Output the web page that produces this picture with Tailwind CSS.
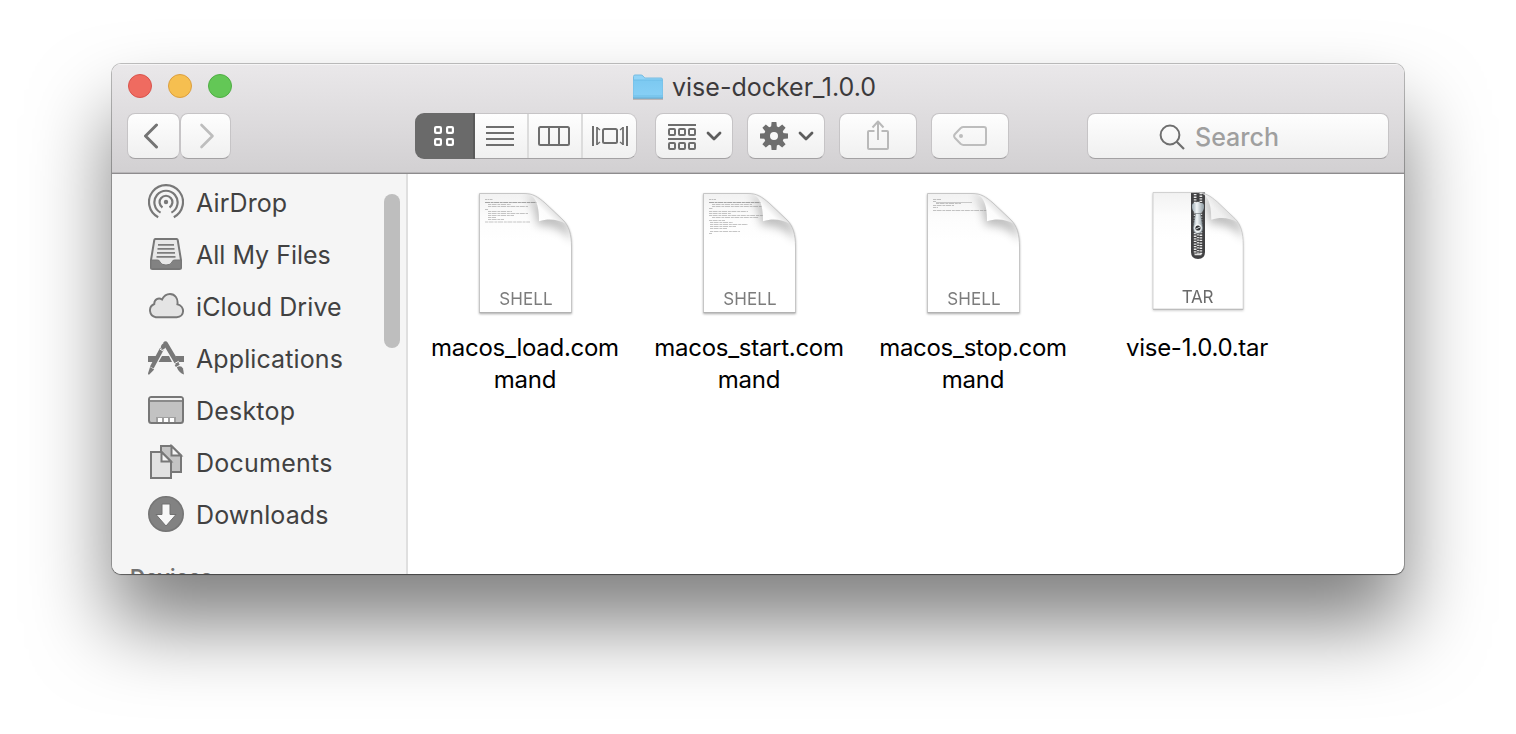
<!DOCTYPE html>
<html lang="en">
<head>
<meta charset="utf-8">
<title>vise-docker_1.0.0</title>
<script src="https://cdn.jsdelivr.net/npm/@tailwindcss/browser@4"></script>
</head>
<body class="h-[734px] overflow-hidden bg-white pt-16 pl-28 font-['Inter',sans-serif]">
<svg class="absolute size-0" aria-hidden="true">
  <defs>
    <linearGradient id="page" x1="0" y1="0" x2="0" y2="1"><stop offset="0" stop-color="#f2f2f2"/><stop offset=".2" stop-color="#fcfcfc"/><stop offset=".4" stop-color="#fff"/></linearGradient>
    <linearGradient id="curl" gradientUnits="userSpaceOnUse" x1="63" y1="31" x2="76" y2="18"><stop offset="0" stop-color="#fff"/><stop offset=".6" stop-color="#fcfcfc"/><stop offset="1" stop-color="#e2e2e2"/></linearGradient>
    <linearGradient id="metal" x1="0" y1="0" x2="1" y2="0"><stop offset="0" stop-color="#9aa8b0"/><stop offset=".4" stop-color="#f1f5f7"/><stop offset="1" stop-color="#8b989f"/></linearGradient>
    <linearGradient id="folder" x1="0" y1="0" x2="0" y2="1"><stop offset="0" stop-color="#7cc9f1"/><stop offset="1" stop-color="#88d0f6"/></linearGradient>
    <filter id="soft" x="-60%" y="-60%" width="220%" height="220%"><feGaussianBlur stdDeviation="5"/></filter>
    <clipPath id="sheet"><path d="M3.500 2.500H48C57 2.500 62 6 69 12L87 29C93 35 95.500 43 95.500 56V121.500H3.500Z"/></clipPath>
    <g id="paper">
      <path d="M3.500 2.500H48C57 2.500 62 6 69 12L87 29C93 35 95.500 43 95.500 56V121.500H3.500Z" fill="url(#page)"/>
      <g clip-path="url(#sheet)"><path d="M53 4L92 32L97 52C88 38 78 35 61 34C60 22 58 12 50 4Z" fill="#000" opacity=".25" filter="url(#soft)"/></g>
    </g>
    <g id="fold">
      <path d="M51 2.500C59 5 63 12 63 30.300C72 27 82 28 90 33L87 29L69 12C62 6 58 3 51 2.500Z" fill="url(#curl)"/>
      <path d="M3.500 2.500H48C57 2.500 62 6 69 12L87 29C93 35 95.500 43 95.500 56V121.500H3.500Z" fill="none" stroke="#c2c2c2" stroke-width=".9"/>
      <path d="M3.500 121.700H95.500" stroke="#adadad" stroke-width=".9"/>
    </g>
  </defs>
</svg>

<main class="flex h-[510px] w-[1292px] flex-col overflow-hidden rounded-[9px] bg-white shadow-[0_0_0_1px_rgba(0,0,0,0.24),0_1px_1px_rgba(0,0,0,0.35),0_50px_80px_rgba(0,0,0,0.5)]">
  <header class="flex h-[110px] shrink-0 flex-col border-b border-[#8e8c8e] bg-linear-to-b from-[#eae8ea] to-[#d2d0d2] shadow-[inset_0_1px_0_#f6f5f6,inset_0_-1px_0_#b8b6b8]">
    <div class="flex h-[49px] items-center pl-4">
      <div class="flex w-[504px] gap-4 pb-[5px]">
        <span class="size-6 rounded-full border border-[#d9534c] bg-[#ef6b60]"></span>
        <span class="size-6 rounded-full border border-[#dc9f3f] bg-[#f6bf50]"></span>
        <span class="size-6 rounded-full border border-[#4fae44] bg-[#63c756]"></span>
      </div>
      <svg class="mb-1 h-[26px] w-8 shrink-0" viewBox="0 0 32 26"><path d="M1 25H31" stroke="#b0a9a6" stroke-width="1.500"/><path d="M1.500 2.500q0-1.500 1.500-1.500H9q1.200 0 2 1l1 1.200q.7.800 1.700.8H29q1.500 0 1.500 1.500V24H1.500Z" fill="#92d4f7" stroke="#76bce2" stroke-width="1"/><path d="M1.500 6H30.500V24H1.500Z" fill="url(#folder)"/><path d="M1.500 6H30.500M1.500 22H30.500" stroke="#6cbbe4" stroke-width=".9"/><path d="M1 24H31" stroke="#5ea6cd" stroke-width="1.200"/></svg>
      <h1 class="ml-2 pb-[3px] text-[25px] leading-8 font-[430] tracking-[0px] whitespace-nowrap text-[#3c3a3c]">vise-docker_1.0.0</h1>
    </div>
    <div class="flex h-[46px] pl-[15px] *:shrink-0">
      <button class="flex w-[53px] items-center justify-center rounded-lg border border-[#c6c4c6] border-b-[#a3a1a3] bg-linear-to-b from-[#fefefe] to-[#f0f0f0]"><svg class="-ml-1.5 h-[26px] w-4" viewBox="0 0 16 26"><path d="M13.500 2L2.500 13L13.500 24" fill="none" stroke="#747474" stroke-width="3" stroke-linecap="round" stroke-linejoin="round"/></svg></button>
      <button class="flex w-[51px] items-center justify-center rounded-lg border border-[#c6c4c6] border-b-[#a3a1a3] bg-linear-to-b from-[#fefefe] to-[#f0f0f0]"><svg class="ml-0.5 h-[26px] w-4" viewBox="0 0 16 26"><path d="M2.500 2L13.500 13L2.500 24" fill="none" stroke="#bdbdbd" stroke-width="2.600" stroke-linecap="round" stroke-linejoin="round"/></svg></button>
      <div class="ml-[184px] flex w-[222px]">
        <div class="flex w-[60px] items-center justify-center rounded-l-[9px] border-r-2 border-[#5a5a5a] bg-[#6a6a6a]"><svg class="size-5" viewBox="0 0 20 20" fill="none" stroke="#fff" stroke-width="2.200"><rect x="1.100" y="1.100" width="5.800" height="5.800" rx="1"/><rect x="13.100" y="1.100" width="5.800" height="5.800" rx="1"/><rect x="1.100" y="13.100" width="5.800" height="5.800" rx="1"/><rect x="13.100" y="13.100" width="5.800" height="5.800" rx="1"/></svg></div>
        <div class="flex flex-1 rounded-r-[9px] border border-l-0 border-[#c6c4c6] border-b-[#a3a1a3] bg-linear-to-b from-[#fefefe] to-[#f0f0f0]">
          <div class="flex w-[54px] items-center justify-center border-r-2 border-[#dcdcdc] pr-0.5"><svg class="h-5 w-7" viewBox="0 0 28 20"><path d="M0 1H28M0 7H28M0 13H28M0 19H28" stroke="#6e6e6e" stroke-width="2"/></svg></div>
          <div class="flex w-[54px] items-center border-r-2 border-[#dcdcdc] pl-[9px]"><svg class="h-5 w-8" viewBox="0 0 32 20"><path d="M11 1V19M21 1V19" stroke="#6e6e6e" stroke-width="2"/><rect x="1" y="1" width="30" height="18" rx="1.500" fill="none" stroke="#6e6e6e" stroke-width="2"/></svg></div>
          <div class="flex flex-1 items-center pl-[9px]"><svg class="h-5 w-9" viewBox="0 0 36 20"><path d="M1 0V20M35 0V20" stroke="#6e6e6e" stroke-width="2"/><path d="M5 1V19M31 1V19" stroke="#6e6e6e" stroke-width="1.800"/><path d="M5 1.500L8 4M5 18.500L8 16M31 1.500L28 4M31 18.500L28 16" stroke="#6e6e6e" stroke-width="1.300"/><rect x="11" y="3" width="14" height="14" rx="1.500" fill="none" stroke="#6e6e6e" stroke-width="2"/></svg></div>
        </div>
      </div>
      <button class="ml-[18px] flex w-[78px] items-center rounded-lg border border-[#c6c4c6] border-b-[#a3a1a3] bg-linear-to-b from-[#fefefe] to-[#f0f0f0] pl-3"><svg class="mt-0.5 h-[26px] w-7" viewBox="0 0 28 26" fill="none" stroke="#6e6e6e" stroke-width="2"><path d="M0 1H28M0 15H28"/><rect x="1" y="5" width="6" height="6" rx="1"/><rect x="11" y="5" width="6" height="6" rx="1"/><rect x="21" y="5" width="6" height="6" rx="1"/><rect x="1" y="19" width="6" height="6" rx="1"/><rect x="11" y="19" width="6" height="6" rx="1"/><rect x="21" y="19" width="6" height="6" rx="1"/></svg><svg class="ml-2.5 h-[10px] w-4" viewBox="0 0 16 10"><path d="M2 2L8 8L14 2" fill="none" stroke="#5d5d5d" stroke-width="2.800" stroke-linecap="round" stroke-linejoin="round"/></svg></button>
      <button class="ml-3.5 flex w-[78px] items-center rounded-lg border border-[#c6c4c6] border-b-[#a3a1a3] bg-linear-to-b from-[#fefefe] to-[#f0f0f0] pl-3"><svg class="size-7" viewBox="-14 -14 28 28"><circle r="7" fill="none" stroke="#6e6e6e" stroke-width="6"/><g fill="#6e6e6e"><g id="teeth"><path d="M-2.400-14H2.400L3-8H-3Z"/><path d="M-2.400 14H2.400L3 8H-3Z"/><path d="M14-2.400V2.400L8 3V-3Z"/><path d="M-14-2.400V2.400L-8 3V-3Z"/></g><use href="#teeth" transform="rotate(45)"/></g></svg><svg class="ml-2.5 h-[10px] w-4" viewBox="0 0 16 10"><path d="M2 2L8 8L14 2" fill="none" stroke="#5d5d5d" stroke-width="2.800" stroke-linecap="round" stroke-linejoin="round"/></svg></button>
      <button class="ml-3.5 flex w-[78px] items-center justify-center rounded-lg border border-[#c6c4c6] border-b-[#a3a1a3] bg-linear-to-b from-[#fefefe] to-[#f0f0f0]"><svg class="mb-0.5 h-[30px] w-[22px]" viewBox="0 0 22 30" fill="none" stroke="#b9b9b9" stroke-width="2" stroke-linejoin="round"><path d="M7.500 11H2Q1 11 1 12V28Q1 29 2 29H20Q21 29 21 28V12Q21 11 20 11H14.500M11 20V2M5.500 7.500L11 1.500L16.500 7.500"/></svg></button>
      <button class="ml-3.5 flex w-[78px] items-center justify-center rounded-lg border border-[#c6c4c6] border-b-[#a3a1a3] bg-linear-to-b from-[#fefefe] to-[#f0f0f0]"><svg class="h-5 w-[34px]" viewBox="0 0 34 20"><path d="M10.500 1H31Q33 1 33 3V17Q33 19 31 19H10.500Q9 19 7.500 17.800L2 12Q.2 10 2 8L7.500 2.200Q9 1 10.500 1Z" fill="none" stroke="#bdbdbd" stroke-width="2"/><circle cx="8" cy="10" r="2" fill="#bdbdbd"/></svg></button>
      <div class="ml-[78px] flex w-[302px] items-center rounded-lg border border-[#c6c4c6] border-b-[#a3a1a3] bg-linear-to-b from-[#fefefe] to-[#f0f0f0] pl-[71px]"><svg class="mt-0.5 size-[26px]" viewBox="0 0 26 26" fill="none" stroke="#6e6e6e" stroke-width="2"><circle cx="11" cy="11" r="9.400"/><path d="M17.500 17.500L25 25" stroke-width="2.200"/></svg><span class="ml-2.5 pt-[3px] text-[25px] font-medium tracking-[0px] text-[#9f9f9f]">Search</span></div>
    </div>
  </header>

  <div class="flex min-h-0 flex-1">
    <aside class="flex w-[296px] shrink-0 justify-between overflow-hidden border-r-2 border-[#dfdfdf] bg-[#f5f5f5]">
      <nav class="pt-0.5 text-[25px] font-[430] tracking-[0.1px] whitespace-nowrap text-[#414141]">
        <a class="flex h-[52px] items-center gap-3 pl-9"><svg class="size-9" viewBox="0 0 36 36" fill="none" stroke="#787878" stroke-width="2.200"><path d="M10.200 33.200A17 17 0 1 1 25.800 33.200M12.600 28.600A11.600 11.600 0 1 1 23.400 28.600M14.500 23.500A6.400 6.400 0 1 1 21.500 23.500"/><circle cx="18" cy="18" r="2.200" fill="#787878" stroke="none"/></svg><span class="pt-[3px]">AirDrop</span></a>
        <a class="flex h-[52px] items-center gap-3 pl-9"><svg class="size-9" viewBox="0 0 36 36"><path d="M7.300 3H28.700Q29.500 3 29.700 4L33 24V31.500Q33 33 31.500 33H4.500Q3 33 3 31.500V24L6.300 4Q6.500 3 7.300 3Z" fill="#e8e8e8" stroke="#777" stroke-width="2"/><path d="M3 24H9.500Q11.500 24 12 26Q13 29 18 29T24 26Q24.500 24 26.500 24H33V32.500H3Z" fill="#828282" stroke="#777" stroke-width="1"/><path d="M10 8.800H26M9.500 12.800H26.500M9 16.800H27M8.500 20.800H27.500" stroke="#7d7d7d" stroke-width="1.700"/></svg><span class="pt-[3px] tracking-[0px]">All My Files</span></a>
        <a class="flex h-[52px] items-center gap-3 pl-9"><svg class="size-9" viewBox="0 0 36 36"><path d="M7.800 29.200A6.900 6.900 0 0 1 6.300 16C6 11.500 10.500 9 14 11.500C16 7.500 19 6 22 6C27 6 30.300 10.500 29.400 16.200C37.200 18 36.900 29.200 28.700 29.200Z" fill="#e4e4e4" stroke="#787878" stroke-width="1.900"/></svg><span class="pt-[3px]">iCloud Drive</span></a>
        <a class="flex h-[52px] items-center gap-3 pl-9"><svg class="size-9" viewBox="0 0 36 36"><path d="M0 16H8.500L5.500 22H0ZM14 16H21L24 22H10.500ZM27.500 16H36V22H30Z" fill="#787878"/><path d="M13.800 9L3.800 27.500" stroke="#787878" stroke-width="4.200"/><path d="M15 7L15.800 5.800" stroke="#787878" stroke-width="4.500" stroke-linecap="round"/><path d="M2 27L6.200 29.500L.8 35L0 33.500Z" fill="#787878"/><path d="M17.500 3.500L28.500 22" stroke="#787878" stroke-width="4.500" stroke-linecap="round"/><path d="M28.600 23.800L29.800 25.800" stroke="#787878" stroke-width="4.500"/><path d="M28.800 27.300Q33 24.500 35 28.500L36 34.500Q31 33 28.800 27.300Z" fill="#787878"/><path d="M26.200 23.800L30.800 21.200M12 9.200L16 11.500" stroke="#f5f5f5" stroke-width="1"/></svg><span class="pt-[3px]">Applications</span></a>
        <a class="flex h-[52px] items-center gap-3 pl-9"><svg class="size-9" viewBox="0 0 36 36"><rect x="1" y="5" width="34" height="26" rx="2.500" fill="#c2c2c2" stroke="#777" stroke-width="2"/><path d="M2 7Q2 6 3 6H33Q34 6 34 7V8H2Z" fill="#f2f2f2"/><path d="M1 9H35" stroke="#777" stroke-width="1.600"/><path d="M8 25H28V30H8Z" fill="#a0a0a0"/><path d="M10 26H14V30H10ZM16 26H20V30H16ZM22 26H26V30H22Z" fill="#fff"/></svg><span class="pt-[3px] tracking-[0.2px]">Desktop</span></a>
        <a class="flex h-[52px] items-center gap-3 pl-9"><svg class="size-9" viewBox="0 0 36 36" stroke="#777" stroke-width="2"><path d="M13 2H23.500L33 11.500V28H13Z" fill="#c4c4c4"/><path d="M23.500 2V11.500H33Z" fill="#f5f5f5"/><path d="M3 8H13.500L23 17.500V34H3Z" fill="#e1e1e1"/><path d="M13.500 8V17.500H23Z" fill="#f5f5f5"/></svg><span class="pt-[3px] tracking-[0.25px]">Documents</span></a>
        <a class="flex h-[52px] items-center gap-3 pl-9"><svg class="size-9" viewBox="0 0 36 36"><circle cx="18" cy="18" r="17.200" fill="#828282" stroke="#757575" stroke-width="1.600"/><path d="M14 8H22V18.500H28L18 30L8 18.500H14Z" fill="#f8f8f8" stroke="#707070" stroke-width="1"/></svg><span class="pt-[3px]">Downloads</span></a>
        <h2 class="pt-[19px] pl-[18px] text-[21px] leading-[38px] font-semibold tracking-[0.2px] text-[#737373]">Devices</h2>
      </nav>
      <div class="mt-5 mr-1.5 h-[154px] w-4 rounded-full bg-[#bebebe]"></div>
    </aside>

    <section class="grid h-[230px] grid-cols-[repeat(4,224px)] pt-[17px] pl-[5px] text-center text-2xl leading-8 font-[420] tracking-[-0.28px] text-black">
      <figure class="flex flex-col items-center"><svg class="h-[126px] w-[98px] drop-shadow-[0_1px_1px_rgba(0,0,0,0.3)]" viewBox="0 0 98 126"><use href="#paper"/><g stroke="#777" stroke-width=".6" opacity=".7"><path d="M9 8.500H17" stroke-dasharray="2 .5"/><path d="M9 11.500H62" stroke-width=".9" stroke-dasharray="5 .6 3 .5"/><path d="M12 13.500H35M12 15.500H52M9 18.500H12M12 20.500H36M12 22.500H52M12 24.500H38M12 26.500H20M12 28.500H28M9 31H54" stroke-dasharray="3 .6 5 .8"/></g><use href="#fold"/><text x="50" y="114" text-anchor="middle" font-size="17" letter-spacing=".1" font-weight="370" fill="#7c7c7c">SHELL</text></svg><figcaption class="mt-[15px]">macos_load.com<br>mand</figcaption></figure>
      <figure class="flex flex-col items-center"><svg class="h-[126px] w-[98px] drop-shadow-[0_1px_1px_rgba(0,0,0,0.3)]" viewBox="0 0 98 126"><use href="#paper"/><g stroke="#777" stroke-width=".6" opacity=".7"><path d="M9 8.500H16" stroke-dasharray="2 .5"/><path d="M9 11.500H62" stroke-width=".9" stroke-dasharray="5 .6 3 .5"/><path d="M12 13.500H52M12 15.500H62M9 17.500H13M9 20.500H48M9 22.500H31M9 24.500H63M12 26.500H59M9 29.500H25M10 31.500H33M10 33.500H48M10 35.500H36M10 37.500H27M10 40.500H40M9 42.500H12" stroke-dasharray="3 .6 5 .8"/></g><use href="#fold"/><text x="50" y="114" text-anchor="middle" font-size="17" letter-spacing=".1" font-weight="370" fill="#7c7c7c">SHELL</text></svg><figcaption class="mt-[15px]">macos_start.com<br>mand</figcaption></figure>
      <figure class="flex flex-col items-center"><svg class="h-[126px] w-[98px] drop-shadow-[0_1px_1px_rgba(0,0,0,0.3)]" viewBox="0 0 98 126"><use href="#paper"/><g stroke="#777" stroke-width=".6" opacity=".7"><path d="M9 8.500H17M9 10.500H12M12 12.500H37M9 14.500H30M9 16.500H14M9 19.500H63" stroke-dasharray="3 .6 5 .8"/><path d="M12 11.500H48" stroke-width=".5"/></g><use href="#fold"/><text x="50" y="114" text-anchor="middle" font-size="17" letter-spacing=".1" font-weight="370" fill="#7c7c7c">SHELL</text></svg><figcaption class="mt-[15px]">macos_stop.com<br>mand</figcaption></figure>
      <figure class="flex flex-col items-center"><svg class="h-[126px] w-[98px] drop-shadow-[0_1px_1px_rgba(0,0,0,0.2)]" viewBox="0 0 98 126"><g transform="translate(1.600 -.9) scale(.98)"><use href="#paper"/></g><path d="M43 1.500H57V61Q57 68 50 68T43 61Z" fill="#414143"/><path d="M47.200 3V63M52.800 2V63" stroke="#e8e8e8" stroke-width="2.800" stroke-dasharray="1.300 1.300"/><path d="M50 2V62" stroke="#414143" stroke-width="2.400"/><path d="M50 42V63" stroke="#d5d5d5" stroke-width="2.400" stroke-dasharray="1.300 1.300" stroke-dashoffset="1.300"/><path d="M44 14Q44.500 11.500 47.500 12Q50 9.500 52.500 12Q55.500 11.500 56 14Q56.500 20 52.500 22V26H47.500V22Q43.500 20 44 14Z" fill="url(#metal)"/><path d="M47.500 22.500H52.500L55 37Q54.700 42.500 50 42.500T45 37Z" fill="url(#metal)" stroke="#4b5054" stroke-width=".5"/><circle cx="50" cy="37" r="3.700" fill="#f4f6f7"/><circle cx="50" cy="37" r="2.600" fill="#303235"/><path d="M48 38L52 36" stroke="#dde3e6" stroke-width="1"/><path d="M46.500 63.500H53.500" stroke="#ddd" stroke-width="1.500"/><g transform="translate(1.600 -.9) scale(.98)" opacity=".8"><use href="#fold"/></g><text x="49.500" y="111.800" text-anchor="middle" font-size="17" letter-spacing="-.2" font-weight="400" fill="#6a6a6a">TAR</text></svg><figcaption class="mt-[15px]">vise-1.0.0.tar</figcaption></figure>
    </section>
  </div>
</main>
</body>
</html>
